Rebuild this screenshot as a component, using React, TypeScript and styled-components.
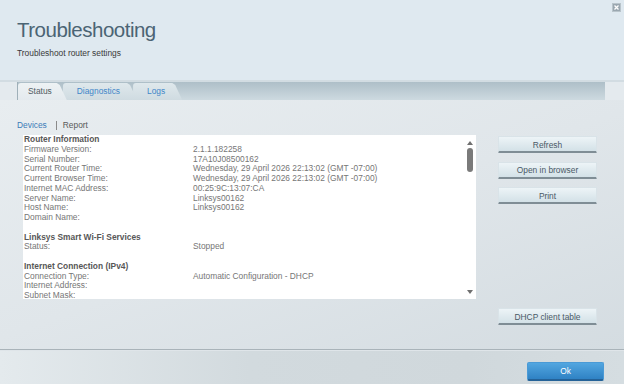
import styled, { createGlobalStyle } from 'styled-components';

const GlobalStyle = createGlobalStyle`
    html, body {
        margin: 0;
        padding: 0;
    }
    body {
        font-family: "Liberation Sans", Arial, sans-serif;
        background: #dfe8ee;
    }
`

const Page = styled.div`
    width: 624px;
    height: 384px;
    display: flex;
    flex-direction: column;
    overflow: hidden;
    background: linear-gradient(100deg, #e6ecef 0%, #dde4e8 45%, #d3dbe0 100%);
`

const Header = styled.header`
    position: relative;
    height: 82px;
    flex-shrink: 0;
    padding: 18px 0 0 17px;
    box-sizing: border-box;
    background: #dfe9f0;
    border-bottom: 2px solid #d2dce2;
`

const Title = styled.h1`
    margin: 0;
    font-size: 20.5px;
    line-height: 24px;
    font-weight: normal;
    letter-spacing: -0.5px;
    color: #4b6474;
`

const Subtitle = styled.p`
    margin: 6px 0 0;
    font-size: 8.4px;
    line-height: 10px;
    color: #3a3a3a;
`

/* small window close box, top right */
const CloseBox = styled.div`
    position: absolute;
    top: 3px;
    right: 3px;
    width: 9px;
    height: 9px;
    box-sizing: border-box;
    background: #9aa7b0;
    border: 1px solid #b9c4cb;
    display: flex;
    align-items: center;
    justify-content: center;
`

const TabBarWrap = styled.div`
    flex-shrink: 0;
    padding: 0 19px 0 17px;
    background: #e4eaee;
`

const TabBar = styled.nav`
    height: 18px;
    display: flex;
    align-items: flex-end;
    border-left: 1px solid #9fb0b9;
    background: linear-gradient(#aebfc8, #cddae0);
`

const Tab = styled.div<{ $active?: boolean; $z: number }>`
    position: relative;
    z-index: ${p => p.$z};
    height: 17px;
    line-height: 17px;
    padding: 0 17px 0 14px;
    margin-left: -4px;
    font-size: 8.4px;
    color: ${p => (p.$active ? '#505a62' : '#3f86c8')};
    background: ${p => (p.$active ? 'linear-gradient(#edf2f4, #e4eaee)' : 'linear-gradient(#dfe8ec, #cfdbe1)')};
    clip-path: polygon(0 0, calc(100% - 10px) 0, calc(100% - 7px) 2px, 100% 100%, 0 100%);
    border-radius: 3px 0 0 0;
    &:first-child {
        margin-left: 0;
        padding-left: 10px;
        padding-right: 15px;
    }
`

const Body = styled.section`
    height: 250px;
    flex-shrink: 0;
    box-sizing: border-box;
    padding: 20px 0 0 17px;
    border-bottom: 1px solid #a9b3b9;
    background: linear-gradient(160deg, #e8edf0 0%, #e0e6ea 50%, #d4dce1 100%);
`

const SubNav = styled.div`
    display: flex;
    align-items: center;
    font-size: 8.4px;
    line-height: 10px;
    color: #555;
`

const SubLink = styled.span<{ $link?: boolean }>`
    color: ${p => (p.$link ? '#3b7bb8' : '#5a5a5a')};
`

const Pipe = styled.span`
    width: 1px;
    height: 9px;
    background: #8a8a8a;
    margin: 0 6px 0 9px;
`

const MainRow = styled.div`
    display: flex;
    align-items: flex-start;
    margin-top: 5px;
    padding-left: 6px;
`

const InfoBox = styled.div`
    width: 453px;
    height: 164px;
    display: flex;
    background: #ffffff;
`

const InfoContent = styled.div`
    flex: 1;
    overflow: hidden;
    padding: 0 0 0 1px;
    font-size: 8.4px;
    line-height: 9.75px;
    color: #767676;
`

const Row = styled.div`
    display: grid;
    grid-template-columns: 169px 1fr;
    height: 9.75px;
    white-space: nowrap;
`

const SectionTitle = styled.div<{ $gap?: boolean }>`
    font-weight: bold;
    color: #575757;
    height: 9.75px;
    margin-top: ${p => (p.$gap ? '9.75px' : '0')};
`

const Scroll = styled.div`
    width: 13px;
    display: flex;
    flex-direction: column;
    align-items: center;
    padding: 6px 0 5px;
    box-sizing: border-box;
`

const Arrow = styled.div<{ $down?: boolean }>`
    width: 0;
    height: 0;
    border-left: 3px solid transparent;
    border-right: 3px solid transparent;
    ${p => (p.$down ? 'border-top: 4px solid #6f6f6f;' : 'border-bottom: 4px solid #6f6f6f;')}
    margin-top: ${p => (p.$down ? 'auto' : '0')};
`

const Thumb = styled.div`
    width: 6px;
    height: 24px;
    margin-top: 3px;
    border-radius: 3px;
    background: #7a7a7a;
`

const ButtonColumn = styled.div`
    width: 99px;
    height: 189px;
    margin: 1px 0 0 22px;
    display: flex;
    flex-direction: column;
    gap: 8.5px;
`

const SideButton = styled.button`
    width: 99px;
    height: 17px;
    padding: 1px 0 0;
    box-sizing: border-box;
    font-family: "Liberation Sans", Arial, sans-serif;
    font-size: 8.4px;
    color: #4a5966;
    background: linear-gradient(#edf4f7, #d3e1e7);
    border: 1px solid #d9e3e8;
    border-bottom: 2px solid #7f8d95;
    border-radius: 1px;
    &:last-child {
        margin-top: auto;
    }
`

const Footer = styled.footer`
    flex: 1;
    display: flex;
    justify-content: flex-end;
    align-items: flex-start;
    padding: 11px 20px 0 0;
    border-top: 1px solid #dfe5e9;
    background: linear-gradient(90deg, #e4eaed 0%, #d2dade 40%, #d0d8dc 75%, #d5dde1 100%);
`

const OkButton = styled.button`
    width: 77px;
    height: 19px;
    box-sizing: border-box;
    font-family: "Liberation Sans", Arial, sans-serif;
    font-size: 8.4px;
    color: #ffffff;
    background: linear-gradient(#52a6e0, #2f82c4);
    border: 1px solid #4a9ad6;
    border-bottom: 2px solid #246298;
    border-radius: 2px;
`

const routerRows: [string, string][] = [
    ['Firmware Version:', '2.1.1.182258'],
    ['Serial Number:', '17A10J08500162'],
    ['Current Router Time:', 'Wednesday, 29 April 2026 22:13:02 (GMT -07:00)'],
    ['Current Browser Time:', 'Wednesday, 29 April 2026 22:13:02 (GMT -07:00)'],
    ['Internet MAC Address:', '00:25:9C:13:07:CA'],
    ['Server Name:', 'Linksys00162'],
    ['Host Name:', 'Linksys00162'],
    ['Domain Name:', ''],
]

const internetRows: [string, string][] = [
    ['Connection Type:', 'Automatic Configuration - DHCP'],
    ['Internet Address:', ''],
    ['Subnet Mask:', ''],
]

export default function App() {
    return (
        <Page>
            <GlobalStyle />
            <Header>
                <Title>Troubleshooting</Title>
                <Subtitle>Troubleshoot router settings</Subtitle>
                <CloseBox>
                    <svg width="5" height="5" viewBox="0 0 5 5">
                        <path d="M0.5 0.5 L4.5 4.5 M4.5 0.5 L0.5 4.5" stroke="#ffffff" strokeWidth="1.3" />
                    </svg>
                </CloseBox>
            </Header>

            <TabBarWrap>
                <TabBar>
                    <Tab $active $z={3}>Status</Tab>
                    <Tab $z={2}>Diagnostics</Tab>
                    <Tab $z={1}>Logs</Tab>
                </TabBar>
            </TabBarWrap>

            <Body>
                <SubNav>
                    <SubLink $link>Devices</SubLink>
                    <Pipe />
                    <SubLink>Report</SubLink>
                </SubNav>

                <MainRow>
                    <InfoBox>
                        <InfoContent>
                            <SectionTitle>Router Information</SectionTitle>
                            {routerRows.map(([k, v]) => (
                                <Row key={k}><span>{k}</span><span>{v}</span></Row>
                            ))}
                            <SectionTitle $gap>Linksys Smart Wi-Fi Services</SectionTitle>
                            <Row><span>Status:</span><span>Stopped</span></Row>
                            <SectionTitle $gap>Internet Connection (IPv4)</SectionTitle>
                            {internetRows.map(([k, v]) => (
                                <Row key={k}><span>{k}</span><span>{v}</span></Row>
                            ))}
                        </InfoContent>
                        <Scroll>
                            <Arrow />
                            <Thumb />
                            <Arrow $down />
                        </Scroll>
                    </InfoBox>

                    <ButtonColumn>
                        <SideButton>Refresh</SideButton>
                        <SideButton>Open in browser</SideButton>
                        <SideButton>Print</SideButton>
                        <SideButton>DHCP client table</SideButton>
                    </ButtonColumn>
                </MainRow>
            </Body>

            <Footer>
                <OkButton>Ok</OkButton>
            </Footer>
        </Page>
    );
}
